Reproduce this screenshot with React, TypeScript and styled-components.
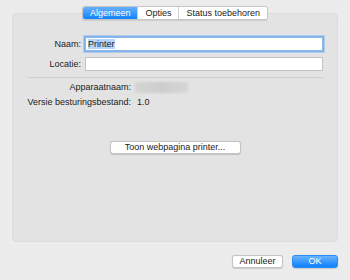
import styled, { createGlobalStyle } from "styled-components"
import { useEffect, useRef, useState } from "react"

const GlobalStyle = createGlobalStyle`
  html, body {
    margin: 0;
    padding: 0;
    background: #ececec;
  }
  body {
    font-family: "Liberation Sans", Arial, sans-serif;
    font-size: 9px;
    color: #222;
  }
`

const tabs = ["Algemeen", "Opties", "Status toebehoren"]

function App() {
  const [active, setActive] = useState(0)
  const [name, setName] = useState("Printer")
  const [location, setLocation] = useState("")
  const nameRef = useRef<HTMLInputElement>(null)

  // naam-veld staat geselecteerd bij openen
  useEffect(() => {
    nameRef.current?.focus()
    nameRef.current?.select()
  }, [])

  return (
    <Window>
      <GlobalStyle />
      <TabBar>
        {tabs.map((tab, index) => (
          <Tab key={tab} $active={index === active} onClick={() => setActive(index)}>
            {tab}
          </Tab>
        ))}
      </TabBar>

      <Panel>
        <FieldRow>
          <FieldLabel>Naam:</FieldLabel>
          <TextInput ref={nameRef} $focused value={name} onChange={(e) => setName(e.target.value)} />
        </FieldRow>
        <FieldRow>
          <FieldLabel>Locatie:</FieldLabel>
          <TextInput value={location} onChange={(e) => setLocation(e.target.value)} />
        </FieldRow>

        <Divider />

        <InfoRow>
          <InfoLabel>Apparaatnaam:</InfoLabel>
          <Blurred />
        </InfoRow>
        <InfoRow>
          <InfoLabel>Versie besturingsbestand:</InfoLabel>
          <InfoValue>1.0</InfoValue>
        </InfoRow>

        <ButtonRow>
          <PushButton $width={131}>Toon webpagina printer...</PushButton>
        </ButtonRow>
      </Panel>

      <Footer>
        <PushButton $width={51}>Annuleer</PushButton>
        <PushButton $width={46} $primary>
          OK
        </PushButton>
      </Footer>
    </Window>
  )
}

const Window = styled.div`
  width: 350px;
  height: 280px;
  display: flex;
  flex-direction: column;
  box-sizing: border-box;
  background: #ececec;
`

const TabBar = styled.div`
  position: relative;
  z-index: 1;
  align-self: center;
  display: flex;
  height: 14px;
  margin-top: 6px;
  margin-bottom: -7px;
  border: 1px solid #c6c6c6;
  border-radius: 3px;
  background: #fff;
  overflow: hidden;
  box-sizing: border-box;
  box-shadow: 0 0.5px 1px rgba(0, 0, 0, 0.1);
`

const Tab = styled.div<{ $active?: boolean }>`
  display: flex;
  align-items: center;
  padding: 0 7px;
  font-size: 9px;
  line-height: 12px;
  cursor: default;
  color: ${({ $active }) => ($active ? "#fff" : "#222")};
  background: ${({ $active }) => ($active ? "linear-gradient(#69b1fa, #0d81ff)" : "#fff")};
  & + & {
    border-left: 1px solid #d0d0d0;
  }
`

const Panel = styled.div`
  margin: 0 12px;
  height: 229px;
  box-sizing: border-box;
  background: #e3e3e3;
  border: 1px solid #dcdcdc;
  border-radius: 4px;
  padding: 23px 14px 0 0;
  display: flex;
  flex-direction: column;
`

const FieldRow = styled.div`
  display: flex;
  align-items: center;
  height: 14px;
  & + & {
    margin-top: 6px;
  }
`

const FieldLabel = styled.label`
  width: 68px;
  text-align: right;
  margin-right: 4px;
  font-size: 9px;
`

const TextInput = styled.input<{ $focused?: boolean }>`
  flex: 1;
  height: 14px;
  box-sizing: border-box;
  margin: 0;
  padding: 0 2px;
  font-family: "Liberation Sans", Arial, sans-serif;
  font-size: 9px;
  color: #222;
  background: #fff;
  border: 1px solid ${({ $focused }) => ($focused ? "#8db8e8" : "#c4c4c4")};
  outline: none;
  box-shadow: ${({ $focused }) => ($focused ? "0 0 0 1.5px #7fb2ef" : "none")};
  &::selection {
    background: #b4d5fe;
    color: #222;
  }
`

const Divider = styled.div`
  height: 1px;
  background: #d0d0d0;
  margin: 6px 0 0 14px;
`

const InfoRow = styled.div`
  display: flex;
  align-items: center;
  height: 12px;
  margin-top: 3px;
  &:first-of-type {
    margin-top: 5px;
  }
`

const InfoLabel = styled.div`
  width: 118px;
  text-align: right;
  margin-right: 4px;
  white-space: nowrap;
`

const InfoValue = styled.div`
  margin-left: 2px;
`

const Blurred = styled.div`
  width: 53px;
  height: 11px;
  background: linear-gradient(90deg, #d4d4d4, #cdcdcd 50%, #d6d6d6);
  border-radius: 2px;
  filter: blur(0.8px);
`

const ButtonRow = styled.div`
  display: flex;
  justify-content: center;
  margin-top: 33px;
  padding-left: 14px;
`

const PushButton = styled.button<{ $width: number; $primary?: boolean }>`
  width: ${({ $width }) => $width}px;
  height: 13px;
  box-sizing: border-box;
  padding: 0;
  font-family: "Liberation Sans", Arial, sans-serif;
  font-size: 9px;
  line-height: 11px;
  border-radius: 3px;
  color: ${({ $primary }) => ($primary ? "#fff" : "#222")};
  background: ${({ $primary }) => ($primary ? "linear-gradient(#6ab3fb, #0e80ff)" : "#fff")};
  border: 1px solid ${({ $primary }) => ($primary ? "#2a8cf5" : "#c4c4c4")};
  box-shadow: 0 0.5px 1px rgba(0, 0, 0, 0.15);
`

const Footer = styled.div`
  display: flex;
  justify-content: flex-end;
  gap: 9px;
  margin: 13px 12px 0 0;
`

export default App
